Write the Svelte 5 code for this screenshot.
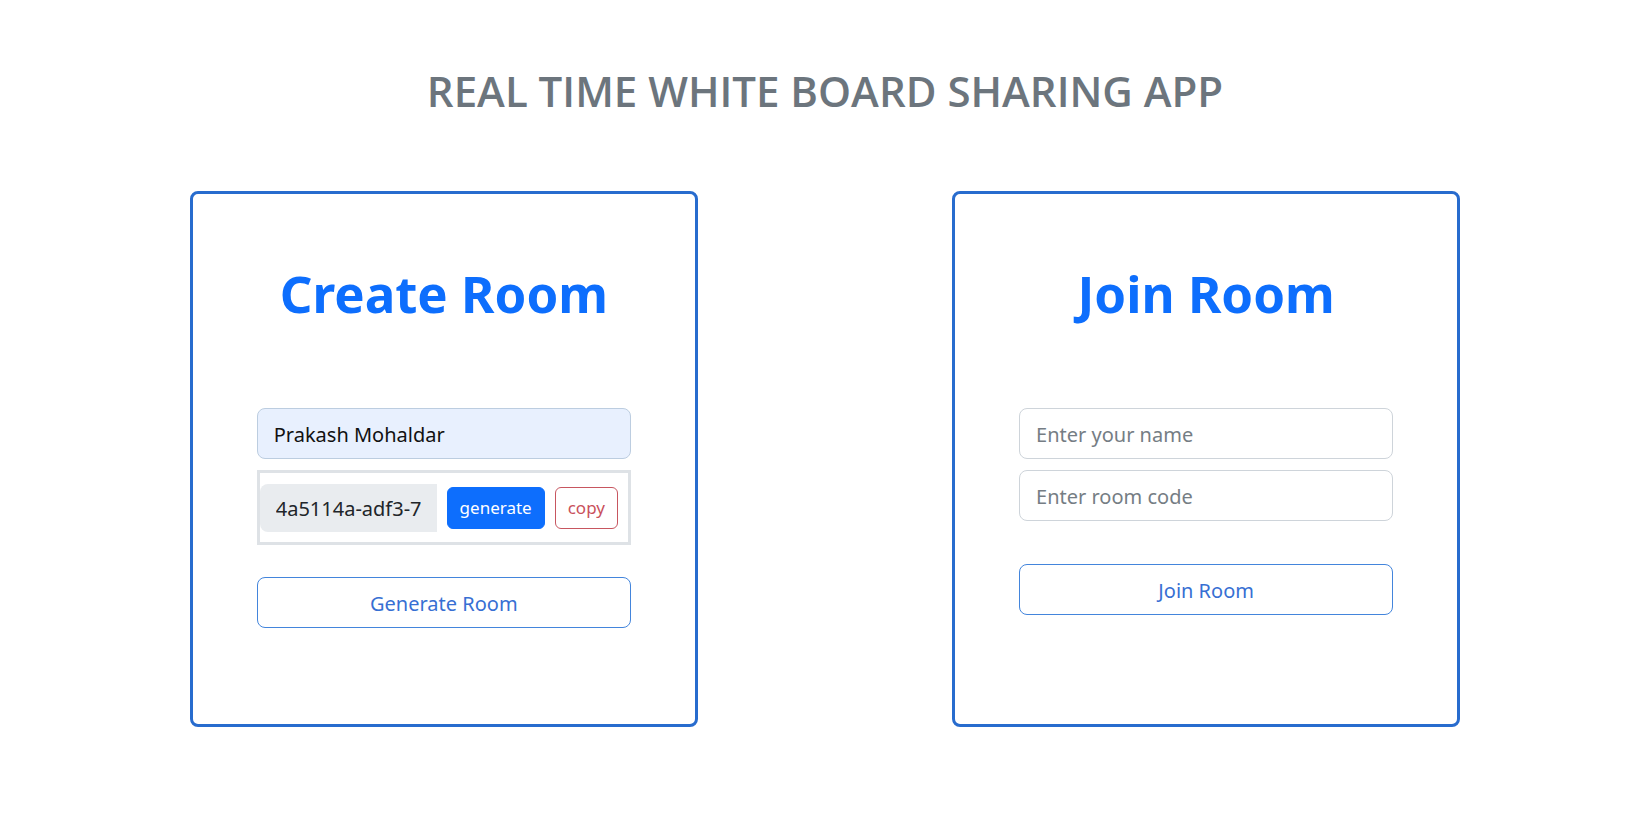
<script>
  let hostName = $state('Prakash Mohaldar');
  let roomCode = $state('4a5114a-adf3-7be1-90cd');
  let guestName = $state('');
  let joinCode = $state('');

  const part = () => Math.random().toString(16).slice(2, 6);
  function generate() {
    roomCode = `${part()}${part()}-${part()}-${part()}-${part()}`;
  }
  function copy() {
    navigator.clipboard?.writeText(roomCode);
  }
</script>

<main>
  <h1>REAL TIME WHITE BOARD SHARING APP</h1>
  <div class="rooms">
    <section class="card">
      <h2>Create Room</h2>
      <form onsubmit={(e) => e.preventDefault()}>
        <input class="field filled" type="text" aria-label="Your name" bind:value={hostName} />
        <div class="code">
          <input class="value" type="text" aria-label="Room code" disabled value={roomCode} />
          <button class="small solid" type="button" onclick={generate}>generate</button>
          <button class="small danger" type="button" onclick={copy}>copy</button>
        </div>
        <button class="submit after-code" type="submit">Generate Room</button>
      </form>
    </section>
    <section class="card join">
      <h2>Join Room</h2>
      <form onsubmit={(e) => e.preventDefault()}>
        <input class="field" type="text" aria-label="Your name" placeholder="Enter your name" bind:value={guestName} />
        <input class="field" type="text" aria-label="Room code" placeholder="Enter room code" bind:value={joinCode} />
        <button class="submit" type="submit">Join Room</button>
      </form>
    </section>
  </div>
</main>

<style>
  :global(body) {
    margin: 0;
    background: #fff;
    color: #212529;
    font-family: "Segoe UI", "Noto Sans", "Open Sans", sans-serif;
  }
  * {
    box-sizing: border-box;
  }
  main {
    padding: 63px 0;
  }
  h1 {
    margin: 0;
    color: #6c757d;
    font-family: "Segoe UI", "Open Sans", "Noto Sans", sans-serif;
    font-size: 42px;
    line-height: 56px;
    font-weight: 600;
    text-align: center;
  }
  .rooms {
    display: grid;
    grid-template-columns: minmax(0, 2fr) minmax(0, 1fr) minmax(0, 2fr);
    width: 77%;
    margin: 72px auto 0;
  }
  .card {
    border: 3px solid #286cce;
    border-radius: 8px;
    padding: 64px;
  }
  .join {
    grid-column: 3;
  }
  h2 {
    margin: 0 0 80px;
    color: #0d6efd;
    font-size: 51px;
    line-height: 70px;
    font-weight: 700;
    text-align: center;
  }
  form {
    display: flex;
    flex-direction: column;
    gap: 11px;
    padding-bottom: 32px;
  }
  input,
  button {
    margin: 0;
    font-family: inherit;
    font-size: 20px;
  }
  .field {
    height: 51px;
    padding: 2px 16px 0;
    border: 1px solid #ced4da;
    border-radius: 8px;
    background: #fff;
    color: #212529;
  }
  .filled {
    border-color: #bccde0;
    background: #e8f0fe;
    color: #111;
  }
  input::placeholder {
    color: #757d84;
    opacity: 1;
  }
  .code {
    display: flex;
    align-items: center;
    gap: 10px;
    height: 75px;
    padding-right: 10px;
    border: 3px solid #dee2e6;
  }
  .value {
    flex: 1;
    min-width: 0;
    height: 48px;
    padding: 2px 16px 0;
    border: 0;
    border-radius: 8px 0 0 8px;
    background: #e9ecef;
    color: #212529;
  }
  button {
    cursor: pointer;
    border-radius: 8px;
    background: #fff;
  }
  .small {
    height: 42px;
    padding: 0 12px;
    border: 1px solid;
    border-radius: 6px;
    font-size: 17px;
  }
  .solid {
    border-color: #0d6efd;
    background: #0d6efd;
    color: #fff;
  }
  .danger {
    border-color: #c75660;
    color: #c9515b;
  }
  .submit {
    height: 51px;
    margin-top: 32px;
    padding: 2px 16px 0;
    border: 1px solid #4385dc;
    color: #376fd3;
  }
  .after-code {
    margin-top: 21px;
  }
</style>
